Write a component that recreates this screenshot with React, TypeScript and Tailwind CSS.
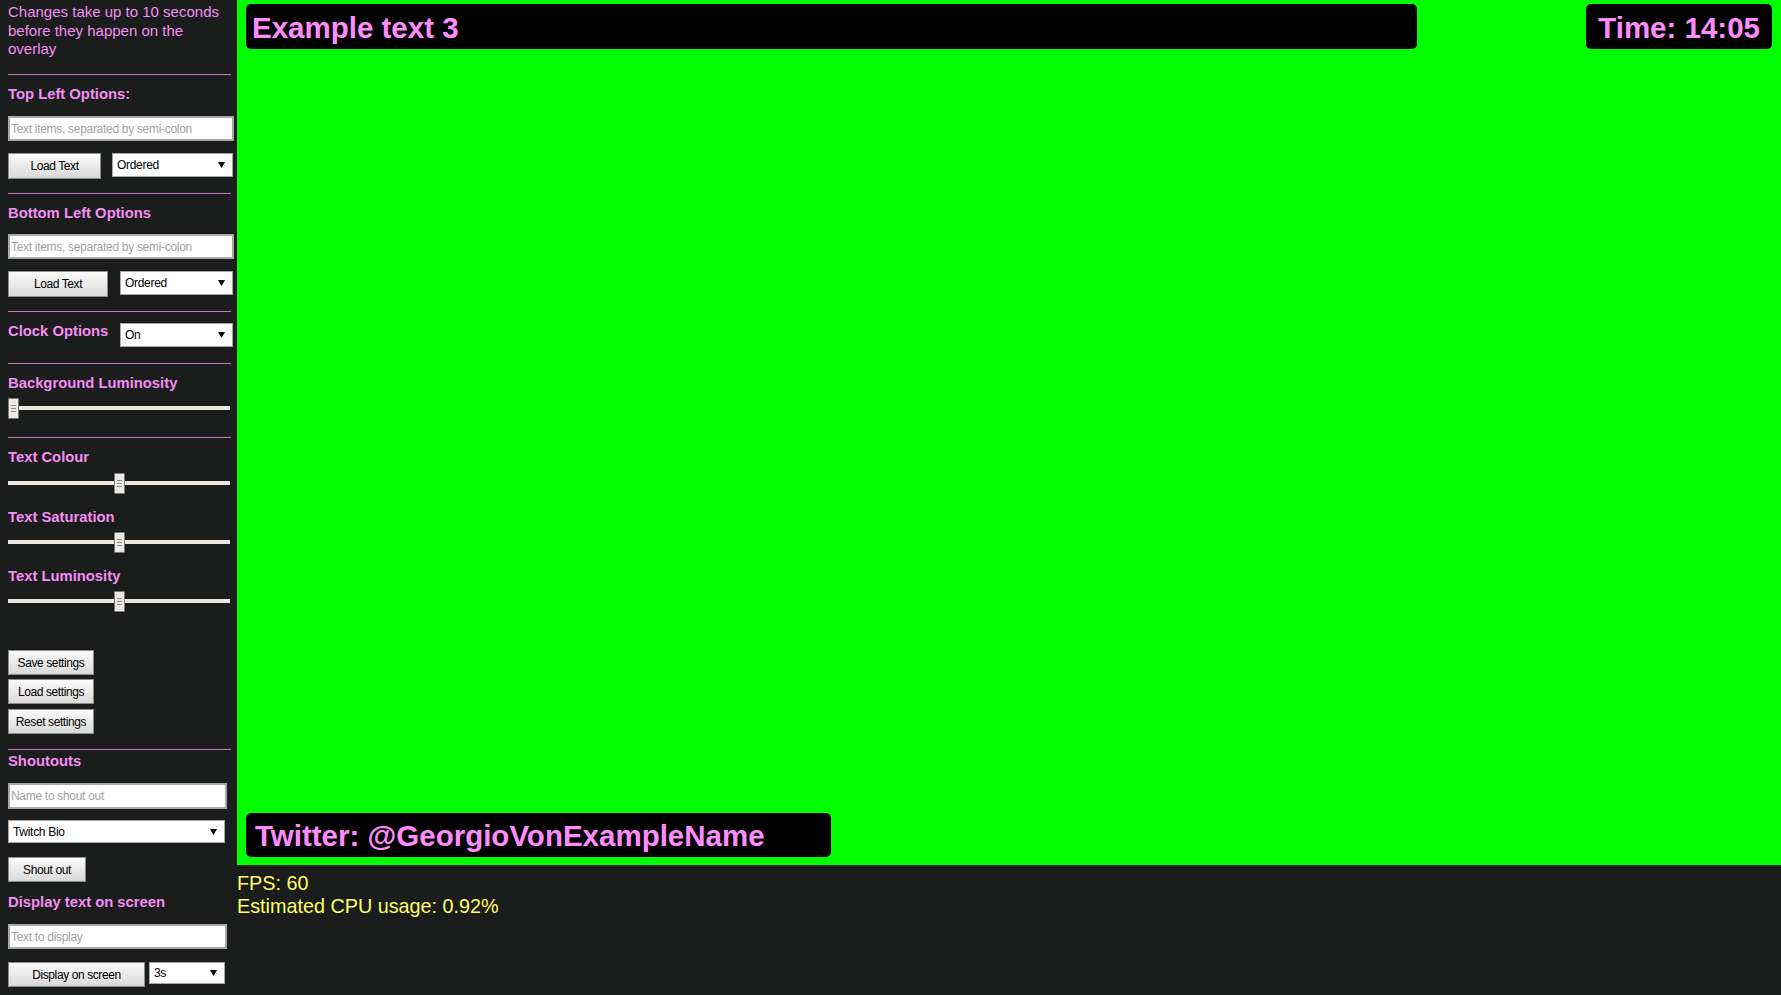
import React from "react";

function H({ children, className = "" }: { children: React.ReactNode; className?: string }) {
  return (
    <div className={`text-[14.8px] font-bold leading-[17px] text-[#f38ef3] ${className}`}>{children}</div>
  );
}

function Hr({ className = "" }: { className?: string }) {
  return <div className={`h-px w-[223px] bg-[#c07ac0] ${className}`} />;
}

function Slider({ pos, className = "" }: { pos: number; className?: string }) {
  return (
    <div className={`relative h-[21px] w-[222px] ${className}`}>
      <div className="absolute left-0 right-0 top-[8px] h-[4px] bg-[#ebe7e1]" />
      <div
        className="absolute top-0 flex h-[21px] w-[11px] flex-col items-center justify-center gap-[2px] rounded-[1px] border border-[#7a7a7a] bg-[#ece9e4]"
        style={{ left: pos }}
      >
        <div className="h-px w-[5px] bg-[#8a8a8a]" />
        <div className="h-px w-[5px] bg-[#8a8a8a]" />
        <div className="h-px w-[5px] bg-[#8a8a8a]" />
      </div>
    </div>
  );
}

function Select({ text, className = "" }: { text: string; className?: string }) {
  return (
    <div
      className={`flex items-center justify-between border border-[#a6a6a6] bg-white pl-[4px] pr-[7px] text-[12px] tracking-[-0.3px] text-black ${className}`}
    >
      <span>{text}</span>
      <svg width="7" height="6" viewBox="0 0 7 6">
        <path d="M0 0H7L3.5 6Z" fill="#000" />
      </svg>
    </div>
  );
}

function Btn({ children, className = "" }: { children: React.ReactNode; className?: string }) {
  return (
    <button
      className={`flex items-center justify-center border border-[#8c8c8c] bg-linear-to-b from-[#fbfbfb] to-[#d9d9d9] text-[12px] tracking-[-0.4px] text-black ${className}`}
    >
      {children}
    </button>
  );
}

function Input({ placeholder, className = "" }: { placeholder: string; className?: string }) {
  return (
    <input
      placeholder={placeholder}
      className={`block border-2 border-[#a8a8a8] bg-white px-[1px] text-[12px] tracking-[-0.3px] text-black outline-none placeholder:text-[#a3a3a3] ${className}`}
    />
  );
}

export default function App() {
  return (
    <div className="flex min-h-screen bg-[#1b1c1c] font-['Liberation_Sans',Arial,sans-serif]">
      <aside className="w-[237px] shrink-0 pl-[8px] pt-[3px]">
        <div className="w-[226px] text-[15px] leading-[18.5px] text-[#f38ef3]">
          Changes take up to 10 seconds before they happen on the overlay
        </div>
        <Hr className="mt-[15.5px]" />
        <H className="mt-[10.5px]">Top Left Options:</H>
        <Input placeholder="Text items, separated by semi-colon" className="mt-[13.5px] h-[25px] w-[226px]" />
        <div className="mt-[12px] flex items-start gap-[11px]">
          <Btn className="h-[26px] w-[93px]">Load Text</Btn>
          <Select text="Ordered" className="h-[24px] w-[121px]" />
        </div>
        <Hr className="mt-[14px]" />
        <H className="mt-[10.5px]">Bottom Left Options</H>
        <Input placeholder="Text items, separated by semi-colon" className="mt-[12.5px] h-[25px] w-[226px]" />
        <div className="mt-[12px] flex items-start gap-[12px]">
          <Btn className="h-[26px] w-[100px]">Load Text</Btn>
          <Select text="Ordered" className="h-[24px] w-[113px]" />
        </div>
        <Hr className="mt-[14px]" />
        <div className="mt-[11px] flex w-[225px] items-start justify-between">
          <H className="-mt-[0.5px]">Clock Options</H>
          <Select text="On" className="h-[24px] w-[113px]" />
        </div>
        <Hr className="mt-[16px]" />
        <H className="mt-[10.5px]">Background Luminosity</H>
        <Slider pos={0} className="mt-[6.5px]" />
        <Hr className="mt-[18px]" />
        <H className="mt-[10.5px]">Text Colour</H>
        <Slider pos={106} className="mt-[7.5px]" />
        <H className="mt-[14.5px]">Text Saturation</H>
        <Slider pos={106} className="mt-[6.5px]" />
        <H className="mt-[14.5px]">Text Luminosity</H>
        <Slider pos={106} className="mt-[6.5px]" />
        <Btn className="mt-[38px] h-[25px] w-[86px]">Save settings</Btn>
        <Btn className="mt-[4px] h-[25px] w-[86px]">Load settings</Btn>
        <Btn className="mt-[5px] h-[25px] w-[86px]">Reset settings</Btn>
        <Hr className="mt-[15px]" />
        <H className="mt-[2.5px]">Shoutouts</H>
        <Input placeholder="Name to shout out" className="mt-[13.5px] h-[26px] w-[219px]" />
        <Select text="Twitch Bio" className="mt-[11px] h-[23px] w-[217px]" />
        <Btn className="mt-[14px] h-[25px] w-[78px]">Shout out</Btn>
        <H className="mt-[11.5px]">Display text on screen</H>
        <Input placeholder="Text to display" className="mt-[13.5px] h-[25px] w-[219px]" />
        <div className="mt-[13px] flex items-start gap-[4px] pb-[8px]">
          <Btn className="h-[25px] w-[137px]">Display on screen</Btn>
          <Select text="3s" className="h-[22px] w-[76px]" />
        </div>
      </aside>
      <main className="flex min-w-0 flex-1 flex-col">
        <div className="flex h-[865px] flex-col justify-between bg-[#00ff00] px-[9px] pb-[8px] pt-[4px]">
          <div className="flex items-start justify-between">
            <div className="h-[45px] w-[1171px] rounded-[5px] bg-black pl-[6px] pt-[3px] text-[29.5px] font-bold leading-[42px] text-[#ff8cff]">
              Example text 3
            </div>
            <div className="h-[45px] rounded-[5px] bg-black px-[12px] pt-[3px] text-[29.5px] font-bold leading-[42px] text-[#ff8cff]">
              Time: 14:05
            </div>
          </div>
          <div className="h-[44px] w-[585px] rounded-[5px] bg-black pl-[9px] pt-[2px] text-[29.5px] font-bold leading-[42px] text-[#ff8cff]">
            Twitter: @GeorgioVonExampleName
          </div>
        </div>
        <div className="pt-[6.5px] text-[19.8px] leading-[23px] text-[#ffff66]">
          <div>FPS: 60</div>
          <div>Estimated CPU usage: 0.92%</div>
        </div>
      </main>
    </div>
  );
}
